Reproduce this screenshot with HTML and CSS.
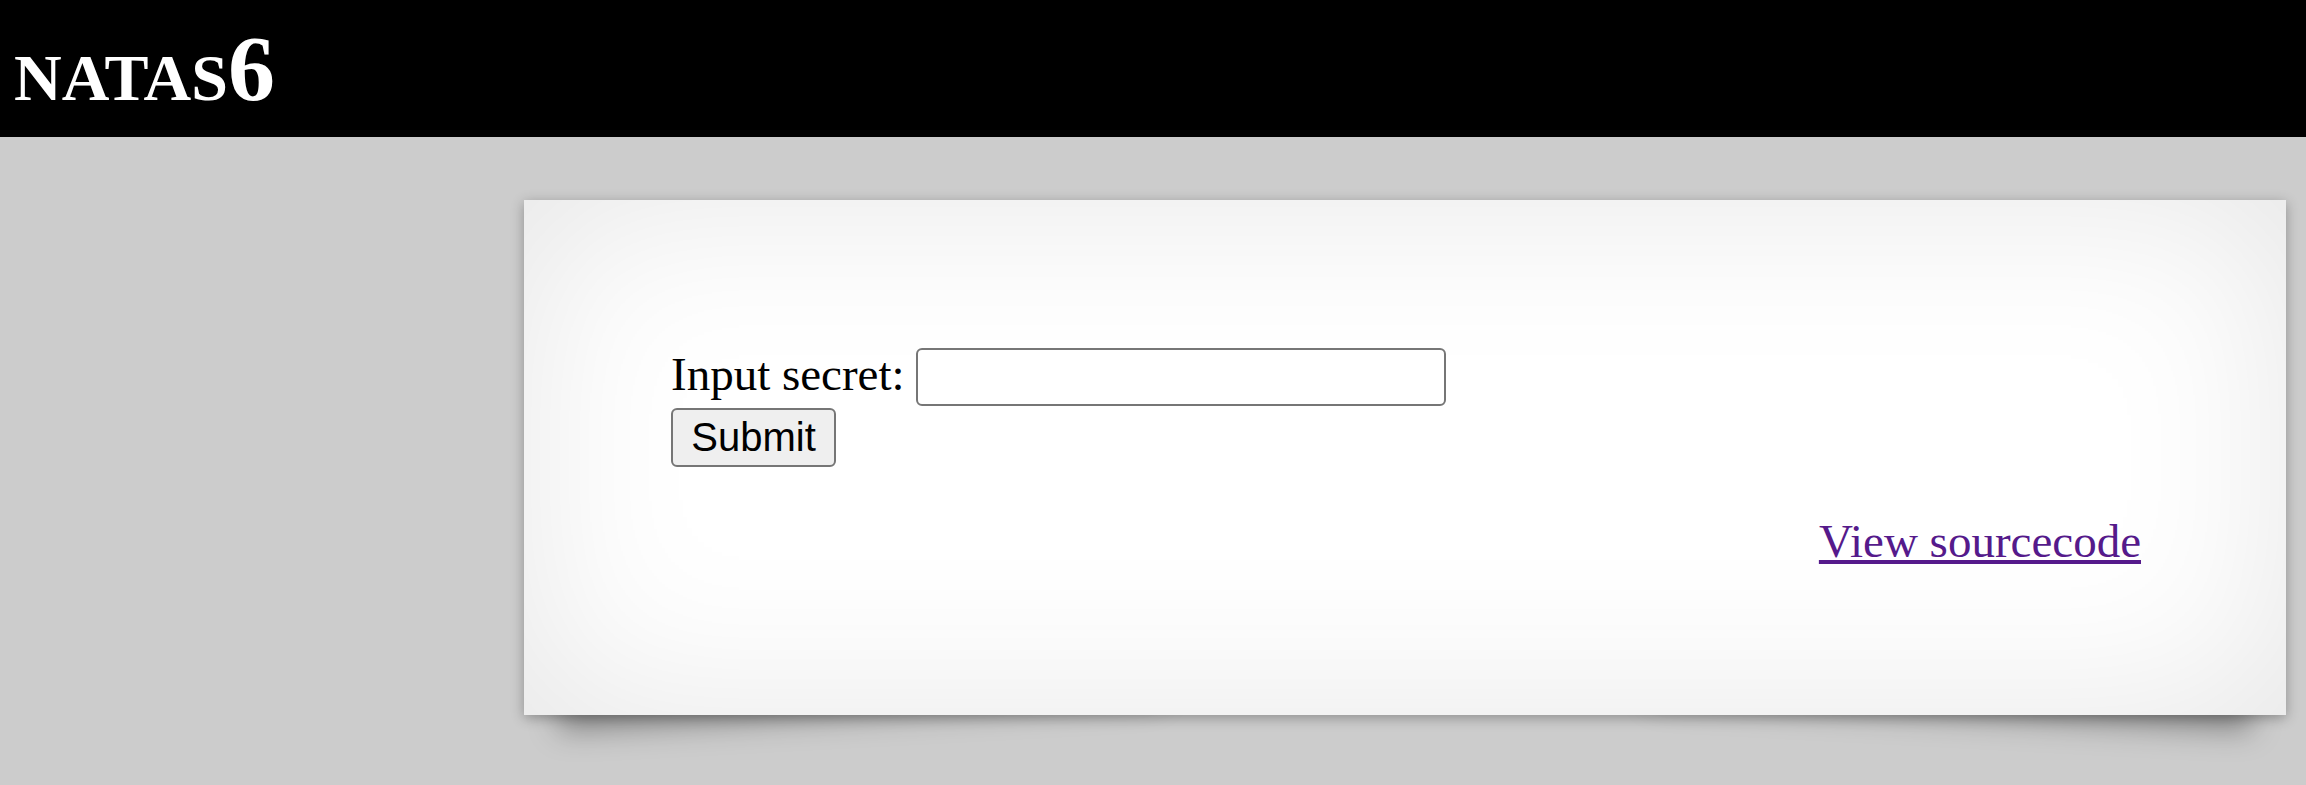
FILE: index.html
```html
<!DOCTYPE html>
<html>
<head>
<meta charset="utf-8">
<title>natas6</title>
<link rel="stylesheet" href="styles.css">
</head>
<body>
<h1 class="title">natas6</h1>
<div class="content">
  <form class="secret-form" method="post">
    Input secret: <input class="secret-input" name="secret"><br>
    <input class="submit-btn" type="submit" name="submit" value="Submit">
  </form>
  <div class="viewsource"><a class="source-link" href="#">View sourcecode</a></div>
</div>
</body>
</html>
```
FILE: styles.css
```css
html, body {
  margin: 0;
  padding: 0;
}
body {
  background: #cccccc;
  font-family: "Liberation Serif", "Times New Roman", serif;
  font-size: 47px;
  color: #000;
  min-height: 785px;
}
.title {
  background: #000;
  color: #fff;
  margin: 0 0 63px 0;
  padding: 14px 14px 15px 14px;
  font-size: 94px;
  font-weight: bold;
  font-variant: small-caps;
  line-height: normal;
}
.content {
  position: relative;
  box-sizing: border-box;
  width: 1762px;
  margin: 0 20px 0 auto;
  padding: 147px 145px 147px 147px;
  background: #fff;
  box-shadow: 0 3px 12px rgba(0, 0, 0, 0.3), 0 0 180px rgba(0, 0, 0, 0.1) inset;
}
.content::before,
.content::after {
  content: "";
  position: absolute;
  z-index: -2;
  bottom: 45px;
  left: 30px;
  width: 50%;
  height: 20%;
  max-width: 600px;
  box-shadow: 0 45px 30px rgba(0, 0, 0, 0.35);
  transform: rotate(-3deg);
}
.content::after {
  left: auto;
  right: 30px;
  transform: rotate(3deg);
}
.secret-form {
  margin: 0 0 47px 0;
}
.secret-input {
  box-sizing: border-box;
  width: 530px;
  height: 58px;
  font-family: "Liberation Sans", Arial, sans-serif;
  font-size: 39px;
  padding: 4px 6px;
  border: 2px solid #767676;
  border-radius: 6px;
  background: #fff;
  vertical-align: baseline;
  margin: 0;
}
.submit-btn {
  box-sizing: border-box;
  width: 165px;
  height: 59px;
  font-family: "Liberation Sans", Arial, sans-serif;
  font-size: 40px;
  color: #000;
  padding: 4px 18px;
  border: 2px solid #767676;
  border-radius: 6px;
  background: #efefef;
  margin: 2px 0 0 0;
}
.viewsource {
  text-align: right;
}
.source-link {
  color: #551a8b;
  text-decoration: underline;
}
```
